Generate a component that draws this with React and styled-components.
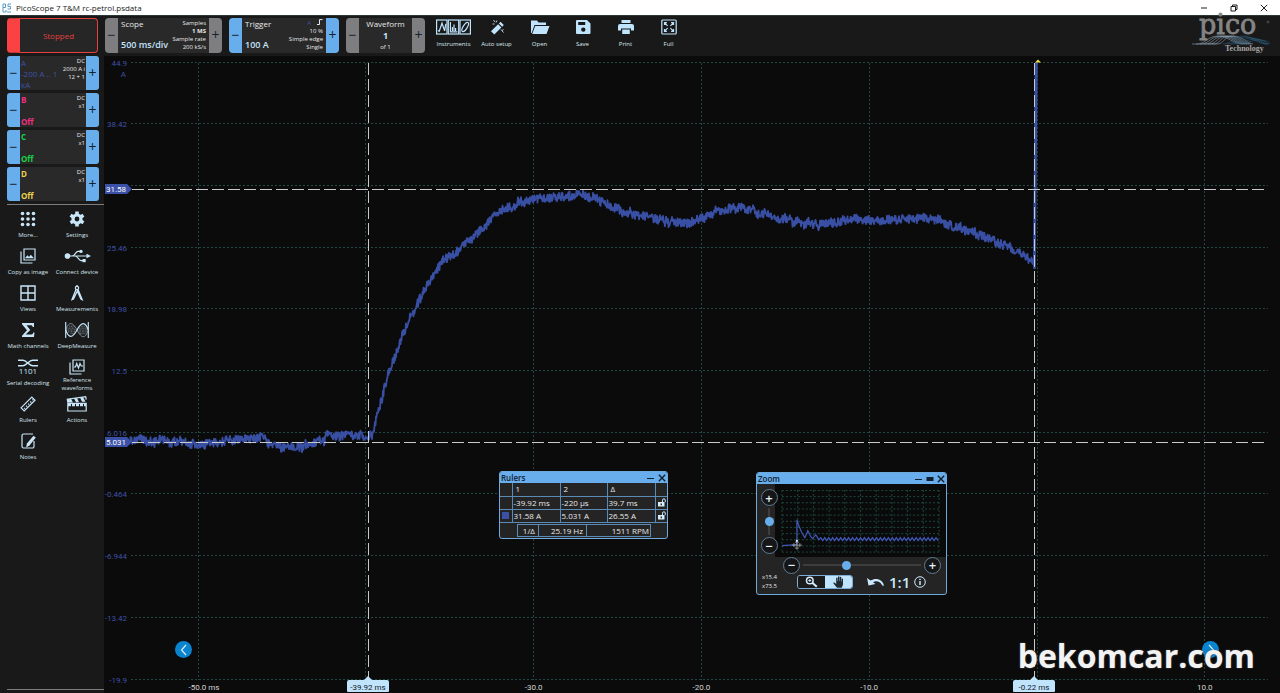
import { useState } from "react";
import styled, { createGlobalStyle, css } from "styled-components";

const GlobalStyle = createGlobalStyle`
  * {
    box-sizing: border-box;
  }
  body {
    margin: 0;
    background: #0b0b0b;
    color: #e8e8e8;
    font-family: "Open Sans", "Noto Sans", sans-serif;
    font-size: 8px;
  }
  button {
    font: inherit;
    color: inherit;
    border: 0;
    padding: 0;
    background: none;
    cursor: pointer;
  }
`;

/* ---------- icons ---------- */

const Svg = ({ w = 16, h = 16, box = "0 0 16 16", children }) => (
  <svg
    width={w}
    height={h}
    viewBox={box}
    fill="none"
    stroke="currentColor"
    strokeWidth="1.2"
    overflow="visible"
    aria-hidden="true"
  >
    {children}
  </svg>
);

const InstrumentsIcon = () => (
  <Svg w={35} h={16} box="0 0 35 16">
    <rect x="0.6" y="1" width="10.4" height="14" />
    <rect x="12.3" y="1" width="10.4" height="14" />
    <rect x="24" y="1" width="10.4" height="14" />
    <path d="M2 11.5l1.2.8L6 4.2l2.6 7.6 1.2-7" />
    <path d="M14.4 3v9.8h7M16.4 12V8M18 12V5.5M19.6 12V9" />
    <ellipse cx="29.2" cy="8" rx="2" ry="5.2" transform="rotate(32 29.2 8)" />
  </Svg>
);

const WandIcon = () => (
  <Svg>
    <path
      d="M2 12.3L9.1 5.2l3.3 3.3L5.3 15.6zM9.9 4.4l1.6-1.6 3.3 3.3L13.2 7.7z"
      fill="currentColor"
      stroke="none"
    />
    <path d="M4.5 1l1.6 2M8 1.5L7 3.5M3.5 5h2M12 10.5l2.5 3M14.5 10.5l-1.5 1" strokeWidth="0.9" />
  </Svg>
);

const OpenIcon = () => (
  <Svg w={20} h={16} box="0 0 20 16">
    <path
      d="M1 14V1.5h6L8.5 3.5H16V6H4.5L1.7 14zM5.2 7H19.5l-3 8H2.2z"
      fill="currentColor"
      stroke="none"
    />
  </Svg>
);

const SaveIcon = () => (
  <Svg>
    <path
      fillRule="evenodd"
      fill="currentColor"
      stroke="none"
      d="M1 2a1 1 0 011-1h10l3.5 3.5V14a1 1 0 01-1 1H2a1 1 0 01-1-1zM3.2 3v3h7V3zM8.3 8.4a2.2 2.2 0 100 4.4 2.2 2.2 0 000-4.4z"
    />
  </Svg>
);

const PrintIcon = () => (
  <Svg>
    <path
      fillRule="evenodd"
      fill="currentColor"
      stroke="none"
      d="M3.5 1h9v3h-9zM2 5h12a2 2 0 012 2v4.5h-3V9.5H3v2H0V7a2 2 0 012-2zM4.2 10.5h7.6V15H4.2z"
    />
  </Svg>
);

const FullIcon = () => (
  <Svg>
    <rect x="0.8" y="1" width="14.4" height="14" rx="1" />
    <path d="M3.5 6V3.7h2.4M3.6 3.8l3 3M12.5 6V3.7h-2.4M12.4 3.8l-3 3M3.5 10v2.3h2.4M3.6 12.2l3-3M12.5 10v2.3h-2.4M12.4 12.2l-3-3" />
  </Svg>
);

const DotsIcon = () => (
  <Svg>
    {[2.5, 8, 13.5].map((y) =>
      [2.5, 8, 13.5].map((x) => (
        <circle key={`${x}-${y}`} cx={x} cy={y} r="1.8" fill="currentColor" stroke="none" />
      ))
    )}
  </Svg>
);

const GearIcon = () => (
  <Svg>
    <circle cx="8" cy="8" r="4" strokeWidth="3.2" />
    {[0, 60, 120].map((a) => (
      <path
        key={a}
        d="M8 .5V3.5M8 12.5v3"
        strokeWidth="3.6"
        transform={`rotate(${a} 8 8)`}
      />
    ))}
  </Svg>
);

const CopyImageIcon = () => (
  <Svg>
    <path d="M1 3.5V15h11.5M4 1h11v11H4z" />
    <path d="M5 10.3l2.4-3 1.6 1.6 1.8-2.2 3.2 3.6z" fill="currentColor" stroke="none" />
  </Svg>
);

const UsbIcon = () => (
  <Svg w={27} h={16} box="0 0 27 16">
    <circle cx="3.5" cy="8" r="2.8" fill="currentColor" stroke="none" />
    <path d="M3 8h20M8 8c3 0 3.5-4.6 6-4.6h2M11 8c3 0 3.5 4.6 6 4.6h2" />
    <path d="M22.5 5.8L27 8l-4.5 2.2z" fill="currentColor" stroke="none" />
    <circle cx="17" cy="3.4" r="1.7" fill="currentColor" stroke="none" />
    <path d="M18.5 11h3.2v3.2h-3.2z" fill="currentColor" stroke="none" />
  </Svg>
);

const ViewsIcon = () => (
  <Svg>
    <path d="M1 1h14v14H1zM8 1v14M1 8h14" strokeWidth="1.4" />
  </Svg>
);

const CompassIcon = () => (
  <Svg>
    <circle cx="8" cy="3" r="1.7" />
    <path d="M7 4.5L3 14.5l1.5-.6L8.3 6l3.6 8 1.3.6L9 4.5M8 0v1" strokeWidth="1.3" />
  </Svg>
);

const SigmaIcon = () => (
  <Svg>
    <path
      d="M2 1h12v4h-1.3c-.2-1.2-.7-1.7-1.9-1.7H6.500L10.300 8l-4.600 4.500h5.600c1.200 0 1.700-.6 2-1.900h1.200L14 15H2v-1.300L7 8.300 2 2.300z"
      fill="currentColor"
      stroke="none"
    />
  </Svg>
);

const DeepIcon = () => (
  <Svg w={26} h={16} box="0 0 26 17">
    <path d="M1 0v17M25 0v17" />
    <path d="M1 8.5C4 17 8 18 13 8.5S22 0 25 8.5" />
    <path d="M1 8.5C4 0 8-1 13 8.5s9 9.5 12 0" strokeWidth="0.6" />
    <path d="M2 8.5h22M3 6.5h8M3.5 10.5h8M15 6.5h9M15 10.5h9M5 4.5h5M16 12.5h6M6 12.5h4M17 4.5h5" strokeWidth="0.6" strokeDasharray="1 0.6" />
  </Svg>
);

const SerialIcon = () => (
  <Svg w={20} h={16} box="0 0 20 16">
    <path d="M0 1.3h5c3.5 0 6 5.4 9.5 5.4H20M0 6.7h5c3.5 0 6-5.4 9.5-5.4H20" strokeWidth="1.6" />
    <text x="10" y="15" textAnchor="middle" fontSize="8" fill="currentColor" stroke="none">
      1101
    </text>
  </Svg>
);

const ReferenceIcon = () => (
  <Svg>
    <path d="M1 3.5V15h11.5M4 1h11v11H4z" />
    <path d="M5 8h1.5l1.2-3.5L9.5 9l1.5-4.5L12.3 7H14" />
  </Svg>
);

const RulerIcon = () => (
  <Svg>
    <path d="M1 11.8L11.8 1 15 4.2 4.2 15zM4 11.8l.9.9M6 9.7l1 1M8.2 7.6l.9.9M10.3 5.5l1 1M12.4 3.4l.9.9" />
  </Svg>
);

const ActionsIcon = () => (
  <Svg w={20} h={16} box="0 0 20 16">
    <path d="M.8 7.3h18.4V15H.8zM.8 6.5L.3 3.2 18.7.6l.5 3" />
    <path d="M1 3.2l3-.4 2 3.7H1zM7 2.4l3-.4 2 4.3H9zM13 1.5l3-.4 2.5 4.7H15z" fill="currentColor" stroke="none" />
    <path d="M1 9h18" strokeWidth="2.4" strokeDasharray="3 1" />
  </Svg>
);

const NotesIcon = () => (
  <Svg>
    <path d="M14 8v5.5a1.5 1.5 0 01-1.5 1.5h-9A1.5 1.5 0 012 13.5V2.5A1.5 1.5 0 013.5 1H13" />
    <path d="M13.5 2.8l2.3 1.8-6.3 8-3.4 1.8.8-3.8z" fill="currentColor" stroke="none" />
  </Svg>
);

const UnlockIcon = () => (
  <Svg w={8} h={9} box="0 0 8 9">
    <path fillRule="evenodd" d="M0 4h6.5v4.5H0zM2.6 5.5v1.7h1.3V5.5z" fill="currentColor" stroke="none" />
    <path d="M4.5 4V2.2a1.4 1.4 0 012.8 0V4" strokeWidth="1" />
  </Svg>
);

const MagnifierIcon = () => (
  <Svg w={13} h={12} box="0 0 13 12">
    <circle cx="4.8" cy="4.5" r="3.3" strokeWidth="1.5" />
    <path d="M7.3 6.8l4.5 4" strokeWidth="2.2" />
    <path d="M3.3 4.5h3M4.8 3v3" strokeWidth="0.9" />
  </Svg>
);

const HandIcon = () => (
  <Svg w={12} h={12} box="0 0 12 12">
    <path
      d="M4 11.8L.5 7.5c-.5-.8.6-1.4 1.2-.8l1.5 1.3V2.2c0-1 1.4-1 1.4 0V5h.4V1c0-1 1.5-1 1.5 0v4h.4V1.6c0-1 1.4-1 1.4 0V5.5h.4V3.2c0-.9 1.3-.9 1.3 0V8.500l-1.200 3.300z"
      fill="currentColor"
      stroke="none"
    />
  </Svg>
);

const UndoIcon = () => (
  <Svg w={18} h={10} box="0 0 18 10">
    <path d="M0 1l1.5 7.5L8.5 7 6 5.3c3-2 7-1.3 9.3 3.2l1.7.2C15.8 2.2 9 .2 3.5 3.5z" fill="currentColor" stroke="none" />
  </Svg>
);

const InfoIcon = () => (
  <Svg w={12} h={12} box="0 0 12 12">
    <circle cx="6" cy="6" r="5.3" strokeWidth="1" />
    <path d="M6 5v4M6 2.7v1.4" strokeWidth="1.5" />
  </Svg>
);

const AppIcon = () => (
  <Svg w={10} h={10} box="0 0 10 10">
    <g stroke="#5b9bc8" strokeWidth="1">
      <path d="M1 9V1h2.5v3.5H1M9 1H6v2.5h2.5V6H5.5M1 9h3V7M5 9h4" />
    </g>
  </Svg>
);

const PicoLogo = () => (
  <Svg w={80} h={38} box="0 0 80 38">
    <g strokeWidth="0.6">
      {[0, 1, 2, 3, 4, 5].map((i) => (
        <path
          key={`a${i}`}
          stroke="#8fa3b3"
          d={`M${1 + i * 4} 28H${6 + i * 4}C${14 + i * 4} 28 ${17 + i * 3} 20 ${27 + i * 3} 20S${42 + i * 3} 28 ${52 + i * 2} 28`}
        />
      ))}
      {[0, 1, 2, 3, 4].map((i) => (
        <path
          key={`b${i}`}
          stroke="#2d5c80"
          d={`M${32 + i * 4} 28c8 0 12-${8 - i} 20-${8 - i}s14 ${8 - i} ${24 - i * 4} ${8 - i}`}
        />
      ))}
    </g>
    <text x="8" y="18" fontSize="27" fontFamily="'DejaVu Serif', serif" fill="#858585" stroke="#858585" strokeWidth="0.8">
      pico
    </text>
    <circle cx="77" cy="6" r="1" stroke="#777" strokeWidth="0.5" />
    <text x="34" y="35" fontSize="8" fontWeight="700" fontFamily="'Liberation Serif', serif" fill="#a5a5a5" stroke="none">
      Technology
    </text>
  </Svg>
);

/* ---------- title bar and toolbar ---------- */

const tools = [
  { label: "Instruments", Icon: InstrumentsIcon },
  { label: "Auto setup", Icon: WandIcon },
  { label: "Open", Icon: OpenIcon },
  { label: "Save", Icon: SaveIcon },
  { label: "Print", Icon: PrintIcon },
  { label: "Full", Icon: FullIcon },
];

const TitleBar = () => (
  <Title>
    <AppIcon />
    <h1>PicoScope 7 T&amp;M rc-petrol.psdata</h1>
    <WindowButtons>
      <button aria-label="Minimize">
        <Svg w={8} h={8} box="0 0 8 8">
          <path d="M1 4h6" strokeWidth="1" />
        </Svg>
      </button>
      <button aria-label="Restore">
        <Svg w={8} h={8} box="0 0 8 8">
          <path d="M1 2.5h4.5V7H1zM2.5 2.5V1H7v4.5H5.5" strokeWidth="1" />
        </Svg>
      </button>
      <button aria-label="Close">
        <Svg w={8} h={8} box="0 0 8 8">
          <path d="M.8.8l6.4 6.4M7.2.8L.8 7.2" strokeWidth="1" />
        </Svg>
      </button>
    </WindowButtons>
  </Title>
);

const Toolbar = () => {
  const [wave] = useState(1);
  return (
    <Bar>
      <StopButton>
        <span>Stopped</span>
      </StopButton>
      <Control $width={117}>
        <Step aria-label="Scope down">−</Step>
        <ControlBody>
          <ControlName>Scope</ControlName>
          <ControlValue>500 ms/div</ControlValue>
        </ControlBody>
        <ControlInfo>
          <span>Samples</span>
          <b>1 MS</b>
          <span>Sample rate</span>
          <span>200 kS/s</span>
        </ControlInfo>
        <Step aria-label="Scope up">+</Step>
      </Control>
      <Control $width={110}>
        <Step $blue aria-label="Trigger down">−</Step>
        <ControlBody>
          <ControlName>Trigger</ControlName>
          <ControlValue>100 A</ControlValue>
        </ControlBody>
        <ControlInfo>
          <span>
            <i>A</i>
            <Svg w={6} h={6} box="0 0 6 6">
              <path d="M0 5.5h2.5V.6H5.5" strokeWidth="1" />
            </Svg>
          </span>
          <span>10 %</span>
          <span>Simple edge</span>
          <span>Single</span>
        </ControlInfo>
        <Step $blue aria-label="Trigger up">+</Step>
      </Control>
      <Control $width={79}>
        <Step aria-label="Previous waveform">−</Step>
        <WaveBody>
          <ControlName>Waveform</ControlName>
          <strong>{wave}</strong>
          <small>of 1</small>
        </WaveBody>
        <Step aria-label="Next waveform">+</Step>
      </Control>
      <Tools>
        {tools.map(({ label, Icon }) => (
          <ToolButton key={label}>
            <Icon />
            {label}
          </ToolButton>
        ))}
      </Tools>
      <PicoLogo />
    </Bar>
  );
};

/* ---------- sidebar ---------- */

const channels = [
  { name: "A", color: "#3f50a6", range: "-200 A .. 1 kA", info: ["DC", "2000 A i", "12 + 1"] },
  { name: "B", color: "#f0307f", range: "Off", info: ["DC", "x1"] },
  { name: "C", color: "#18d048", range: "Off", info: ["DC", "x1"] },
  { name: "D", color: "#ecd24c", range: "Off", info: ["DC", "x1"] },
];

const menu = [
  { label: "More...", Icon: DotsIcon },
  { label: "Settings", Icon: GearIcon },
  { label: "Copy as image", Icon: CopyImageIcon },
  { label: "Connect device", Icon: UsbIcon },
  { label: "Views", Icon: ViewsIcon },
  { label: "Measurements", Icon: CompassIcon },
  { label: "Math channels", Icon: SigmaIcon },
  { label: "DeepMeasure", Icon: DeepIcon },
  { label: "Serial decoding", Icon: SerialIcon },
  { label: "Reference waveforms", Icon: ReferenceIcon, tall: true },
  { label: "Rulers", Icon: RulerIcon },
  { label: "Actions", Icon: ActionsIcon },
  { label: "Notes", Icon: NotesIcon },
];

const Sidebar = () => (
  <Side>
    {channels.map((c) => (
      <Channel key={c.name}>
        <Step $blue aria-label={`Channel ${c.name} down`}>−</Step>
        <ChannelBody $color={c.color} $active={c.range !== "Off"}>
          <span>{c.name}</span>
          <span>{c.range}</span>
        </ChannelBody>
        <ChannelInfo>
          {c.info.map((line) => (
            <span key={line}>{line}</span>
          ))}
        </ChannelInfo>
        <Step $blue aria-label={`Channel ${c.name} up`}>+</Step>
      </Channel>
    ))}
    <Menu>
      {menu.map(({ label, Icon, tall }) => (
        <MenuButton key={label} $tall={tall}>
          <Icon />
          <span>{label}</span>
        </MenuButton>
      ))}
    </Menu>
  </Side>
);

/* ---------- chart ---------- */

const VIEW_W = 1176;
const VIEW_H = 637;
const xOf = (ms) => 933 + ms * 16.78;
const yOf = (amps) => 6.5 + (44.9 - amps) * 9.522;

const yTicks = [44.9, 38.42, 31.94, 25.46, 18.98, 12.5, 6.016, -0.464, -6.944, -13.42, -19.9];
const xTicks = [-50, -40, -30, -20, -10, 0, 10];

// [x, y] mean of the current trace in chart units
const shape = [
  [26, 385], [60, 385], [95, 388], [120, 384], [150, 382], [161, 383],
  [164, 387], [185, 391], [205, 389], [220, 386], [222, 379], [240, 380],
  [266, 380], [269, 377], [272, 364], [278, 343], [286, 314], [296, 287],
  [306, 263], [317, 240], [332, 215], [343, 200], [350, 199], [363, 187],
  [386, 163], [410, 148], [430, 143], [457, 140], [488, 141], [510, 152],
  [530, 159], [548, 161], [564, 167], [586, 167], [600, 162], [613, 154],
  [640, 152], [660, 157], [680, 163], [702, 168], [729, 168], [752, 163],
  [774, 166], [818, 162], [845, 168], [881, 181], [908, 192], [930, 207],
];

const randomFrom = (seed) => {
  let s = seed;
  return () => {
    s = (s * 16807) % 2147483647;
    return s / 2147483647;
  };
};

const buildTrace = () => {
  const rnd = randomFrom(77);
  const points = [];
  let seg = 0;
  let drift = 0;
  for (let x = shape[0][0]; x <= 930; x += 0.5) {
    while (x > shape[seg + 1][0]) seg += 1;
    const [x0, y0] = shape[seg];
    const [x1, y1] = shape[seg + 1];
    const mean = y0 + ((y1 - y0) * (x - x0)) / (x1 - x0);
    drift = drift * 0.85 + (rnd() - 0.5) * 2;
    const noise = (rnd() - 0.5) * 9;
    points.push(`${x} ${(mean + drift + noise).toFixed(1)}`);
  }
  return `M${points.join("L")}L931.5 7`;
};

const trace = buildTrace();

const Chart = () => (
  <ChartSvg viewBox={`0 0 ${VIEW_W} ${VIEW_H}`} preserveAspectRatio="xMinYMin meet" role="img" aria-label="Current over time">
    <g stroke="#214744" strokeDasharray="2 2">
      {yTicks.map((v) => (
        <path key={v} d={`M27 ${Math.round(yOf(v)) - 0.5}H1164`} />
      ))}
      {xTicks.map((v) => (
        <path key={v} d={`M${Math.floor(xOf(v)) + 0.5} 7V624`} />
      ))}
    </g>
    <g fontSize="8" fill="#3f50a6" textAnchor="end">
      {yTicks.map((v) => (
        <text key={v} x="23" y={yOf(v) + 3}>{v}</text>
      ))}
      <text x="22" y="21">A</text>
    </g>
    <g fontSize="8" fill="#d5d5d5" textAnchor="middle">
      {xTicks.filter((v) => v !== -40 && v !== 0).map((v) => (
        <text key={v} x={xOf(v) + (v === -50 ? 6 : 0)} y="634">
          {v.toFixed(1)}
          {v === -50 ? " ms" : ""}
        </text>
      ))}
    </g>
    <path d={trace} fill="none" stroke="#384fa3" strokeWidth="1.8" strokeLinejoin="round" />
    <path d="M930.5 213L932.5 6" stroke="#384fa3" strokeWidth="2.5" />
    <g stroke="#c9c9c9" strokeDasharray="12 4">
      <path d="M28 133.5H1164" />
      <path d="M28 386.5H1164" />
      <path d="M264.5 7V622" />
      <path d="M930.5 7V622" />
    </g>
    <path d="M931 6.5l3-3 3 3z" fill="#e8e23a" />
    {[31.58, 5.031].map((v) => (
      <g key={v} transform={`translate(0 ${Math.round(yOf(v))})`}>
        <path d="M1-5H23l5 5-5 5H1z" fill="#3b51a8" />
        <text x="12" y="3" fontSize="8" fill="#fff" textAnchor="middle">{v}</text>
      </g>
    ))}
    {[-39.92, -0.22].map((v) => (
      <g key={v} transform={`translate(${Math.ceil(xOf(v))} 0)`}>
        <path d="M-19 624H-4l4-4 4 4H19a2 2 0 012 2v9a1 1 0 01-1 1H-20a1 1 0 01-1-1v-9a2 2 0 012-2z" fill="#bfe4fc" />
        <text y="634" fontSize="8" fill="#15202a" textAnchor="middle">{v} ms</text>
      </g>
    ))}
  </ChartSvg>
);

/* ---------- floating windows ---------- */

const RulersWindow = () => (
  <FloatWindow $left={395} $top={415} $width={169}>
    <WindowHead>
      <h2>Rulers</h2>
      <button aria-label="Minimize rulers">
        <Svg w={8} h={8} box="0 0 8 8"><path d="M0 4.5h7" /></Svg>
      </button>
      <button aria-label="Close rulers">
        <Svg w={8} h={8} box="0 0 8 8"><path d="M.8.8l6.4 6.4M7.2.8L.8 7.2" strokeWidth="1.4" /></Svg>
      </button>
    </WindowHead>
    <RulerTable>
      <colgroup>
        <col width="12" />
        <col width="48" />
        <col width="47" />
        <col width="48" />
        <col width="12" />
      </colgroup>
      <thead>
        <tr>
          <th />
          <th>1</th>
          <th>2</th>
          <th>Δ</th>
          <th />
        </tr>
      </thead>
      <tbody>
        <tr>
          <td />
          <td>-39.92 ms</td>
          <td>-220 μs</td>
          <td>39.7 ms</td>
          <td>
            <LockButton aria-label="Lock time rulers"><UnlockIcon /></LockButton>
          </td>
        </tr>
        <tr>
          <td><Swatch /></td>
          <td>31.58 A</td>
          <td>5.031 A</td>
          <td>26.55 A</td>
          <td>
            <LockButton aria-label="Lock signal rulers"><UnlockIcon /></LockButton>
          </td>
        </tr>
      </tbody>
    </RulerTable>
    <Frequency>
      <span>1/Δ</span>
      <span>25.19 Hz</span>
      <span>1511 RPM</span>
    </Frequency>
  </FloatWindow>
);

const previewTail = () => {
  let d = "M7 62L22 61V36L24 42 27 49 30 54 33 47 36 53 38 55 41 51 44 56";
  for (let x = 46; x < 166; x += 4) d += `L${x} 54L${x + 2} 57`;
  return d;
};

const ZoomWindow = () => {
  const [hZoom, setHZoom] = useState(36);
  const [vZoom, setVZoom] = useState(50);
  return (
    <FloatWindow $left={652} $top={416} $width={191}>
      <WindowHead>
        <h2>Zoom</h2>
        <button aria-label="Minimize zoom">
          <Svg w={8} h={8} box="0 0 8 8"><path d="M0 4.5h7" /></Svg>
        </button>
        <button aria-label="Dock zoom">
          <Svg w={8} h={8} box="0 0 8 8"><path d="M.5 4h7" strokeWidth="4" /></Svg>
        </button>
        <button aria-label="Close zoom">
          <Svg w={8} h={8} box="0 0 8 8"><path d="M.8.8l6.4 6.4M7.2.8L.8 7.2" strokeWidth="1.4" /></Svg>
        </button>
      </WindowHead>
      <ZoomTop>
        <VerticalZoom>
          <RoundButton aria-label="Zoom in vertically">+</RoundButton>
          <VSlider
            type="range"
            aria-label="Vertical zoom"
            value={vZoom}
            onChange={(e) => setVZoom(Number(e.target.value))}
          />
          <RoundButton aria-label="Zoom out vertically">−</RoundButton>
        </VerticalZoom>
        <Preview viewBox="0 0 172 73">
          <g stroke="#1f5a50" strokeWidth="0.8" strokeDasharray="2 2">
            {Array.from({ length: 11 }, (_, i) => (
              <path key={`v${i}`} d={`M${7 + i * 15.8} 6V70`} />
            ))}
            {Array.from({ length: 11 }, (_, i) => (
              <path key={`h${i}`} d={`M7 ${6.5 + i * 6.2}H165`} />
            ))}
          </g>
          <path d={previewTail()} fill="none" stroke="#4058b8" strokeWidth="1.2" />
          <g stroke="#a8a8a8" strokeWidth="0.8">
            <path d="M17 61.5h10M22 57v9M19 59.5v4M25 59.5v4M20 58.5h4M20 64.5h4" />
          </g>
          <circle cx="22" cy="57" r="1" fill="#fff" />
        </Preview>
      </ZoomTop>
      <HorizontalZoom>
        <RoundButton aria-label="Zoom out horizontally">−</RoundButton>
        <HSlider
          type="range"
          aria-label="Horizontal zoom"
          value={hZoom}
          onChange={(e) => setHZoom(Number(e.target.value))}
        />
        <RoundButton aria-label="Zoom in horizontally">+</RoundButton>
      </HorizontalZoom>
      <ZoomFoot>
        <ZoomFactor>
          <span>x15.4</span>
          <span>x73.5</span>
        </ZoomFactor>
        <ModeSwitch>
          <ModeButton aria-label="Magnify"><MagnifierIcon /></ModeButton>
          <ModeButton $on aria-label="Pan"><HandIcon /></ModeButton>
        </ModeSwitch>
        <FootButton aria-label="Undo zoom"><UndoIcon /></FootButton>
        <FootButton>1:1</FootButton>
        <FootButton aria-label="Info"><InfoIcon /></FootButton>
      </ZoomFoot>
    </FloatWindow>
  );
};

const App = () => (
  <Page>
    <GlobalStyle />
    <TitleBar />
    <Toolbar />
    <Body>
      <Sidebar />
      <Plot>
        <Chart />
        <RulersWindow />
        <ZoomWindow />
        <NavButton $side="left" aria-label="Previous">
          <Svg w={8} h={12} box="0 0 8 12"><path d="M6 1L1.5 6 6 11" /></Svg>
        </NavButton>
        <NavButton $side="right" aria-label="Next">
          <Svg w={8} h={12} box="0 0 8 12"><path d="M2 1l4.5 5L2 11" /></Svg>
        </NavButton>
        <Watermark>bekomcar.com</Watermark>
      </Plot>
    </Body>
  </Page>
);

export default App;

/* ---------- styles ---------- */

const Page = styled.div`
  display: flex;
  flex-direction: column;
  min-height: 100vh;
`;

const Title = styled.header`
  display: flex;
  align-items: center;
  gap: 4px;
  height: 15px;
  padding: 0 12px 0 2px;
  background: #fff;
  color: #1c1c1c;
  h1 {
    margin: 0;
    font-size: 8px;
    font-weight: 400;
  }
`;

const WindowButtons = styled.div`
  display: flex;
  align-items: center;
  gap: 22px;
  margin-left: auto;
  button {
    display: flex;
  }
`;

const Bar = styled.div`
  display: flex;
  align-items: center;
  gap: 7px;
  height: 41px;
  padding: 0 9px 2px 7px;
  background: #191919;
  border-top: 1px solid #2c3836;
`;

const StopButton = styled.button`
  flex: none;
  width: 91px;
  height: 35px;
  border: 1px solid #e8403f;
  border-left: 13px solid #fb4243;
  border-radius: 4px;
  background: #262626;
  color: #e0413f;
`;

const Control = styled.div`
  flex: none;
  display: flex;
  width: ${(props) => props.$width}px;
  height: 35px;
  border-radius: 4px;
  overflow: hidden;
  background: #292929;
`;

const Step = styled.button`
  flex: none;
  width: 13px;
  font-size: 14px;
  line-height: 1;
  background: ${(props) => (props.$blue ? "#69aeec" : "#7e7e81")};
  color: #16222e;
`;

const ControlBody = styled.div`
  flex: 1;
  display: flex;
  flex-direction: column;
  justify-content: space-between;
  padding: 0 0 2px 3px;
  white-space: nowrap;
`;

const ControlName = styled.span`
  font-size: 8px;
  line-height: 12px;
`;

const ControlValue = styled.span`
  font-size: 9px;
  font-weight: 600;
  line-height: 12px;
  color: #c4e4fb;
`;

const ControlInfo = styled.div`
  display: flex;
  flex-direction: column;
  align-items: flex-end;
  padding: 1px 3px 0 0;
  margin-left: -30px;
  font-size: 6px;
  line-height: 8px;
  white-space: nowrap;
  i {
    margin-right: 6px;
    font-style: normal;
    color: #3f50a6;
  }
`;

const WaveBody = styled.div`
  flex: 1;
  display: flex;
  flex-direction: column;
  align-items: center;
  strong {
    font-size: 9px;
    line-height: 12px;
    color: #c4e4fb;
  }
  small {
    font-size: 6px;
    line-height: 10px;
  }
`;

const Tools = styled.nav`
  display: flex;
  flex: 1;
  height: 100%;
`;

const ToolButton = styled.button`
  flex: none;
  display: flex;
  flex-direction: column;
  align-items: center;
  gap: 5px;
  width: 43px;
  padding-top: 3px;
  font-size: 6px;
  line-height: 8px;
  color: #dce8f0;
  svg {
    color: #bfe4fc;
  }
`;

const Body = styled.div`
  flex: 1;
  display: flex;
`;

const Side = styled.aside`
  flex: none;
  display: flex;
  flex-direction: column;
  gap: 3px;
  width: 104px;
  padding: 0 5px 3px 7px;
  background: #191919;
`;

const Channel = styled.div`
  display: flex;
  height: 34px;
  border-radius: 3px;
  overflow: hidden;
  background: #292929;
`;

const ChannelBody = styled.div`
  flex: 1;
  display: flex;
  flex-direction: column;
  justify-content: space-between;
  padding: 1px 0 0 1px;
  font-size: 8px;
  line-height: 11px;
  font-weight: ${(props) => (props.$active ? 400 : 700)};
  color: ${(props) => props.$color};
`;

const ChannelInfo = styled.div`
  display: flex;
  flex-direction: column;
  align-items: flex-end;
  padding: 1px 1px 0 0;
  font-size: 6px;
  line-height: 8px;
  white-space: nowrap;
`;

const Menu = styled.nav`
  flex: 1;
  display: grid;
  grid-template-columns: 42px 56px;
  grid-auto-rows: 37px;
  align-content: start;
  padding-top: 6px;
  margin-right: -5px;
  border: solid #7d7d7d;
  border-width: 1px 0;
`;

const MenuButton = styled.button`
  display: flex;
  flex-direction: column;
  align-items: center;
  gap: ${(props) => (props.$tall ? 1 : 4)}px;
  font-size: 6px;
  line-height: 8px;
  color: #d5e3ec;
  svg {
    flex: none;
    color: #c9e6f8;
  }
  span {
    width: 46px;
    margin: 0 -2px;
  }
`;

const Plot = styled.main`
  position: relative;
  flex: 1;
  min-width: 0;
  overflow: hidden;
  background: #0b0b0b;
`;

const ChartSvg = styled.svg`
  display: block;
  width: 100%;
  font-family: Roboto, sans-serif;
`;

const FloatWindow = styled.section`
  position: absolute;
  left: ${(props) => props.$left}px;
  top: ${(props) => props.$top}px;
  width: ${(props) => props.$width}px;
  border: 1px solid #6fa9dc;
  border-radius: 3px;
  overflow: hidden;
  background: #242424;
`;

const WindowHead = styled.header`
  display: flex;
  align-items: center;
  gap: 3px;
  height: 11px;
  padding: 0 1px;
  background: #69aeec;
  color: #13202c;
  h2 {
    flex: 1;
    margin: 0;
    font-size: 8px;
    font-weight: 600;
    line-height: 11px;
  }
  button {
    display: flex;
  }
`;

const RulerTable = styled.table`
  width: 100%;
  table-layout: fixed;
  border-collapse: collapse;
  font-size: 8px;
  th,
  td {
    height: 13px;
    padding: 0 1px;
    border: 1px solid #5b8ab6;
    font-weight: 400;
    line-height: 12px;
    text-align: left;
    white-space: nowrap;
  }
  th {
    padding: 0 3px;
  }
  th:first-child,
  td:first-child {
    border-left: 0;
  }
  th:last-child,
  td:last-child {
    border-right: 0;
  }
  tr:first-child th {
    border-top: 0;
  }
`;

const Swatch = styled.div`
  width: 7px;
  height: 7px;
  margin-left: 1px;
  background: #3b51a8;
`;

const LockButton = styled.button`
  display: flex;
  margin-left: 1px;
  color: #d4ecfc;
`;

const Frequency = styled.div`
  display: grid;
  grid-template-columns: 20px 48px 66px;
  margin: 1px 16px 1px 17px;
  border: 1px solid #5b8ab6;
  font-size: 8px;
  line-height: 11px;
  text-align: right;
  span {
    padding-right: 3px;
  }
  span + span {
    border-left: 1px solid #5b8ab6;
  }
`;

const ZoomTop = styled.div`
  display: flex;
`;

const VerticalZoom = styled.div`
  position: relative;
  z-index: 1;
  display: flex;
  flex-direction: column;
  align-items: center;
  width: 24px;
  margin-right: -6px;
  padding: 5px 0 0;
`;

const RoundButton = styled.button`
  flex: none;
  width: 17px;
  height: 17px;
  border: 1px solid #5f7d96;
  border-radius: 50%;
  background: #161616;
  font-size: 13px;
  font-weight: 600;
  line-height: 14px;
  color: #e4f3fd;
`;

const thumb = css`
  appearance: none;
  width: 9px;
  height: 9px;
  border-radius: 50%;
  background: #69aeec;
`;

const HSlider = styled.input`
  appearance: none;
  flex: 1;
  min-width: 0;
  height: 9px;
  margin: 0;
  background: linear-gradient(#3d3d3d, #3d3d3d) center / 100% 2px no-repeat;
  &::-webkit-slider-thumb {
    ${thumb}
  }
`;

const VSlider = styled.input`
  appearance: none;
  writing-mode: vertical-lr;
  direction: rtl;
  width: 9px;
  height: 27px;
  margin: 2px 0;
  background: linear-gradient(#3d3d3d, #3d3d3d) center / 2px 100% no-repeat;
  &::-webkit-slider-thumb {
    ${thumb}
  }
`;

const Preview = styled.svg`
  flex: 1;
  min-width: 0;
  background: #0a0a0a;
`;

const HorizontalZoom = styled.div`
  display: flex;
  align-items: center;
  gap: 3px;
  padding: 0 5px 0 26px;
`;

const ZoomFoot = styled.div`
  display: flex;
  align-items: center;
  gap: 6px;
  height: 20px;
  padding: 0 0 4px 5px;
`;

const ZoomFactor = styled.div`
  display: flex;
  flex-direction: column;
  width: 29px;
  font-size: 6px;
  line-height: 9px;
`;

const ModeSwitch = styled.div`
  display: flex;
  width: 56px;
  height: 14px;
  margin-right: 8px;
  border: 1px solid #7eaed6;
  border-radius: 3px;
  overflow: hidden;
`;

const ModeButton = styled.button`
  flex: 1;
  display: flex;
  align-items: center;
  justify-content: center;
  background: ${(props) => (props.$on ? "#bfe4fc" : "#1b1b1b")};
  color: ${(props) => (props.$on ? "#1f2a33" : "#d4ecfc")};
`;

const FootButton = styled.button`
  display: flex;
  margin-right: -2px;
  font-size: 15px;
  font-weight: 600;
  line-height: 14px;
  color: #c9e8fb;
`;

const NavButton = styled.button`
  position: absolute;
  bottom: 35px;
  ${(props) => (props.$side === "left" ? "left: 71px;" : "right: 61px;")}
  display: flex;
  align-items: center;
  justify-content: center;
  width: 17px;
  height: 17px;
  border-radius: 50%;
  background: #0a84cf;
  color: #d8eefb;
`;

const Watermark = styled.div`
  position: absolute;
  right: 25px;
  bottom: 13px;
  font-size: 32px;
  font-weight: 700;
  line-height: 48px;
  color: #f3f3f3;
  text-shadow: 0 0 2px #555;
`;
